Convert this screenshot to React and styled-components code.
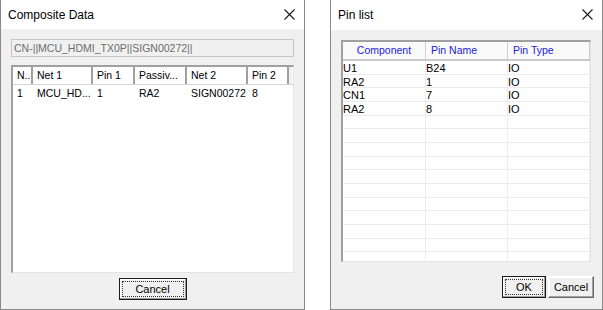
import styled, { createGlobalStyle } from "styled-components";

const GlobalStyle = createGlobalStyle`
  html, body {
    margin: 0;
    padding: 0;
    background: #ffffff;
  }
  body {
    font-family: "Liberation Sans", Arial, sans-serif;
  }
`;

const compositeColumns = [
  { title: "N..", width: 20 },
  { title: "Net 1", width: 60 },
  { title: "Pin 1", width: 42 },
  { title: "Passiv...", width: 52 },
  { title: "Net 2", width: 61 },
  { title: "Pin 2", width: 41 },
];

const compositeRows = [["1", "MCU_HD...", "1", "RA2", "SIGN00272", "8"]];

const pinColumns = [
  { title: "Component", width: 83, center: true },
  { title: "Pin Name", width: 82 },
  { title: "Pin Type", width: 82 },
];

const pinRows = [
  ["U1", "B24", "IO"],
  ["RA2", "1", "IO"],
  ["CN1", "7", "IO"],
  ["RA2", "8", "IO"],
];

const CloseIcon = () => (
  <svg width="11" height="11" viewBox="0 0 11 11">
    <path d="M0.5 0.5 L10.5 10.5 M10.5 0.5 L0.5 10.5" stroke="#1a1a1a" strokeWidth="1.1" fill="none" />
  </svg>
);

const App = () => {
  const emptyPinRows = Array.from({ length: 12 });

  return (
    <StPage>
      <GlobalStyle />
      <StDialog $width={305}>
        <StTitleBar $height={29}>
          <StTitle>Composite Data</StTitle>
          <StClose $right={9}>
            <CloseIcon />
          </StClose>
        </StTitleBar>
        <StBody $pad="10px 10px 0 10px">
          <StField>CN-||MCU_HDMI_TX0P||SIGN00272||</StField>
          <StListBox $width={283} $height={208} $top={8}>
            <StHeaderRow>
              {compositeColumns.map(({ title, width }) => (
                <StHeaderCell key={title} $width={width}>
                  {title}
                </StHeaderCell>
              ))}
              <StHeaderFill />
            </StHeaderRow>
            {compositeRows.map((row, i) => (
              <StDataRow key={i}>
                {row.map((value, j) => (
                  <StDataCell key={j} $width={compositeColumns[j].width}>
                    {value}
                  </StDataCell>
                ))}
              </StDataRow>
            ))}
          </StListBox>
          <StButtonRow $justify="center">
            <StButton $default $width={68}>
              <StFocus>Cancel</StFocus>
            </StButton>
          </StButtonRow>
        </StBody>
      </StDialog>

      <StDialog $width={273}>
        <StTitleBar $height={30}>
          <StTitle>Pin list</StTitle>
          <StClose $right={9}>
            <CloseIcon />
          </StClose>
        </StTitleBar>
        <StBody $pad="10px 8px 0 10px">
          <StListBox $width={250} $height={222} $top={0}>
            <StPinHeader>
              {pinColumns.map(({ title, width, center }) => (
                <StPinHeaderCell key={title} $width={width} $center={center}>
                  {title}
                </StPinHeaderCell>
              ))}
            </StPinHeader>
            {pinRows.map((row, i) => (
              <StPinRow key={i}>
                {row.map((value, j) => (
                  <StPinCell key={j} $width={pinColumns[j].width}>
                    {value}
                  </StPinCell>
                ))}
              </StPinRow>
            ))}
            {emptyPinRows.map((_, i) => (
              <StPinRow key={`e${i}`}>
                {pinColumns.map(({ title, width }) => (
                  <StPinCell key={title} $width={width} />
                ))}
              </StPinRow>
            ))}
          </StListBox>
          <StButtonRow $justify="flex-end" $top={14}>
            <StButton $default $width={44}>
              <StFocus>OK</StFocus>
            </StButton>
            <StButton $width={46}>Cancel</StButton>
          </StButtonRow>
        </StBody>
      </StDialog>
    </StPage>
  );
};
export default App;

const StPage = styled.div`
  width: 603px;
  height: 310px;
  display: flex;
  gap: 25px;
  overflow: hidden;
`;

const StDialog = styled.div`
  width: ${({ $width }) => $width}px;
  height: 310px;
  box-sizing: border-box;
  border: 1px solid #8a8a8a;
  border-top: none;
  background: #f0f0f0;
  display: flex;
  flex-direction: column;
`;

const StTitleBar = styled.div`
  height: ${({ $height }) => $height}px;
  flex: none;
  background: #ffffff;
  display: flex;
  align-items: center;
  padding-left: 7px;
  position: relative;
`;

const StTitle = styled.span`
  font-family: "Liberation Sans", Arial, sans-serif;
  font-size: 12px;
  color: #000000;
`;

const StClose = styled.div`
  position: absolute;
  right: ${({ $right }) => $right}px;
  top: 9px;
  width: 11px;
  height: 11px;
  display: flex;
`;

const StBody = styled.div`
  flex: 1;
  padding: ${({ $pad }) => $pad};
  display: flex;
  flex-direction: column;
`;

const StField = styled.div`
  width: 283px;
  height: 18px;
  box-sizing: border-box;
  border: 1px solid #c6c6c6;
  background: #f0f0f0;
  color: #6d6d6d;
  font-size: 10.5px;
  line-height: 16px;
  padding-left: 2px;
  white-space: nowrap;
`;

const StListBox = styled.div`
  width: ${({ $width }) => $width}px;
  height: ${({ $height }) => $height}px;
  margin-top: ${({ $top }) => $top}px;
  box-sizing: border-box;
  background: #ffffff;
  border-top: 2px solid #a0a0a0;
  border-left: 2px solid #a0a0a0;
  border-right: 1px solid #e3e3e3;
  border-bottom: 1px solid #e3e3e3;
  overflow: hidden;
`;

const StHeaderRow = styled.div`
  display: flex;
  height: 17px;
  border-bottom: 1px solid #d5d5d5;
`;

const StHeaderCell = styled.div`
  width: ${({ $width }) => $width}px;
  flex: none;
  box-sizing: border-box;
  border-right: 2px solid #a0a0a0;
  padding-left: 4px;
  font-size: 10.5px;
  line-height: 17px;
  color: #000000;
  white-space: nowrap;
  overflow: hidden;
`;

const StHeaderFill = styled.div`
  width: 3px;
  flex: none;
  background: #f0f0f0;
`;

const StDataRow = styled.div`
  display: flex;
  height: 14px;
  margin-top: 1px;
`;

const StDataCell = styled.div`
  width: ${({ $width }) => $width}px;
  flex: none;
  box-sizing: border-box;
  padding-left: 4px;
  font-size: 10.5px;
  line-height: 14px;
  color: #000000;
  white-space: nowrap;
`;

const StPinHeader = styled.div`
  display: flex;
  height: 17px;
  border-bottom: 2px solid #c8c8c8;
  background: #fafafa;
`;

const StPinHeaderCell = styled.div`
  width: ${({ $width }) => $width}px;
  flex: none;
  box-sizing: border-box;
  border-right: 1px solid #cfcfcf;
  padding-left: ${({ $center }) => ($center ? 0 : 5)}px;
  text-align: ${({ $center }) => ($center ? "center" : "left")};
  font-size: 10.5px;
  line-height: 17px;
  color: #2020e0;
  white-space: nowrap;
`;

const StPinRow = styled.div`
  display: flex;
  height: 13.67px;
  box-sizing: border-box;
  border-bottom: 1px solid #ececec;
`;

const StPinCell = styled.div`
  width: ${({ $width }) => $width}px;
  flex: none;
  box-sizing: border-box;
  border-right: 1px solid #ececec;
  font-size: 11px;
  line-height: 14px;
  color: #000000;
  white-space: nowrap;
  overflow: hidden;
`;

const StButtonRow = styled.div`
  display: flex;
  justify-content: ${({ $justify }) => $justify};
  gap: 2px;
  margin-top: ${({ $top }) => $top || 5}px;
`;

const StButton = styled.div`
  width: ${({ $width }) => $width}px;
  height: 22px;
  box-sizing: border-box;
  background: #f0f0f0;
  border: 1px solid ${({ $default }) => ($default ? "#1a1a1a" : "#6a6a6a")};
  border-top-color: ${({ $default }) => ($default ? "#1a1a1a" : "#ffffff")};
  border-left-color: ${({ $default }) => ($default ? "#1a1a1a" : "#ffffff")};
  box-shadow: inset -1px -1px 0 #a0a0a0, inset 1px 1px 0 #ffffff;
  font-size: 11px;
  color: #000000;
  display: flex;
  align-items: center;
  justify-content: center;
  padding: 2px;
`;

const StFocus = styled.div`
  width: 100%;
  height: 100%;
  box-sizing: border-box;
  border: 1px dotted #333333;
  display: flex;
  align-items: center;
  justify-content: center;
`;
